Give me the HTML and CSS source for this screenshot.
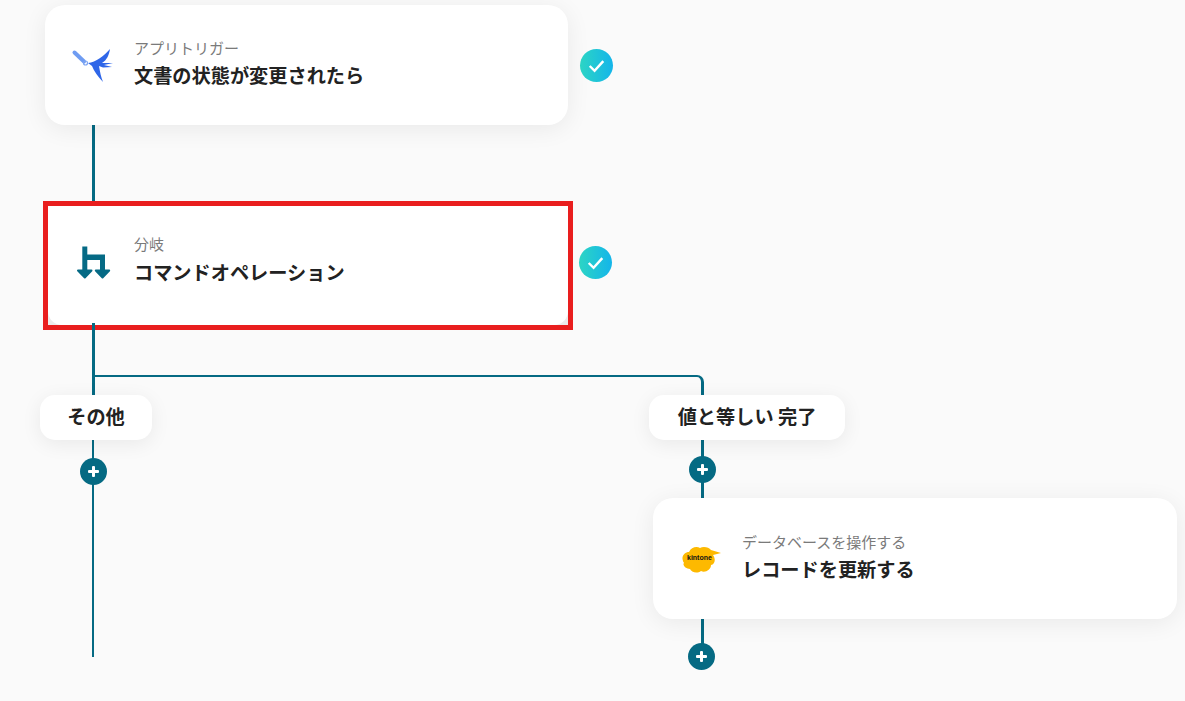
FILE: index.html
```html
<!DOCTYPE html>
<html lang="ja">
<head>
<meta charset="UTF-8">
<meta name="viewport" content="width=device-width, initial-scale=1.0">
<title>フロー</title>
<link rel="stylesheet" href="styles.css">
</head>
<body>

<div class="flow">
  <!-- connectors -->
  <div class="line line-main"></div>
  <div class="line line-left"></div>
  <div class="branch"></div>
  <div class="line line-right"></div>

  <div class="card card-trigger">
    <svg class="card-icon" viewBox="0 0 44 44">
      <path d="M3.5 9.5 L13 18.5" stroke="#6f9cf2" stroke-width="4" stroke-linecap="round" fill="none"/>
      <circle cx="14.5" cy="20" r="2" fill="none" stroke="#7fa6f2" stroke-width="1.2"/>
      <path d="M17 20 C25 19 33 13 39 6 C38 12 36 17 31 20 L42 20 L33 22 L41 24 L32 24.5 L28 23 C29 29 30 34 32 39 C27 34 23 28 21 23 Z" fill="#2f66e8"/>
    </svg>
    <div class="card-text">
      <div class="card-label">アプリトリガー</div>
      <div class="card-title">文書の状態が変更されたら</div>
    </div>
  </div>
  <div class="check check-1"><svg viewBox="0 0 34 34"><path d="M10 17.5 L15 22.5 L24 12.5"/></svg></div>

  <div class="card card-branch">
    <svg class="card-icon" viewBox="0 0 44 44">
      <path d="M6.3 2.5 H11.3 V10.5 H29 V27 H24 V16 H11.3 V27 H6.3 Z" fill="#056a85"/>
      <path d="M2 26.5 H15.5 L8.8 33.5 Z M19.8 26.5 H33.2 L26.5 33.5 Z" fill="#056a85" stroke="#056a85" stroke-width="2" stroke-linejoin="round"/>
    </svg>
    <div class="card-text">
      <div class="card-label">分岐</div>
      <div class="card-title">コマンドオペレーション</div>
    </div>
  </div>
  <div class="line line-stub"></div>
  <div class="check check-2"><svg viewBox="0 0 34 34"><path d="M10 17.5 L15 22.5 L24 12.5"/></svg></div>

  <div class="pill pill-other">その他</div>
  <div class="pill pill-equal">値と等しい 完了</div>

  <div class="plus plus-1"></div>
  <div class="plus plus-2"></div>
  <div class="plus plus-3"></div>

  <div class="card card-kintone">
    <div class="kintone-logo">
      <svg viewBox="0 0 40 28">
        <path d="M1 15 C-1 10 3 6 7 6 C9 1 15 0 18 2 C21 0 27 1 29 4 L39 7 L31 9 C34 13 33 18 29 19 C29 24 23 27 19 25 C15 28 9 26 8 23 C4 23 0 19 2 17 C1.5 16 1 15.5 1 15 Z" fill="#fdb900"/>
      </svg>
      <span class="kintone-name">kintone</span>
    </div>
    <div class="card-text">
      <div class="card-label">データベースを操作する</div>
      <div class="card-title">レコードを更新する</div>
    </div>
  </div>
</div>

</body>
</html>
```

FILE: styles.css
```css
html, body {
  margin: 0;
  height: 100%;
  overflow: hidden;
}
body {
  font-family: "Noto Sans CJK JP", "Noto Sans", sans-serif;
  background-color: #fafafa;
  color: #222;
}

/* nodes of the diagram are placed on a free canvas */
.flow {
  position: relative;
  width: 1185px;
  height: 701px;
}

.line {
  position: absolute;
  background-color: #056a83;
}
.line-main {
  left: 92px;
  top: 120px;
  width: 3px;
  height: 320px;
}
.line-stub {
  left: 92px;
  top: 323px;
  width: 3px;
  height: 8px;
}
.line-left {
  left: 92px;
  top: 440px;
  width: 2px;
  height: 217px;
}
.branch {
  position: absolute;
  left: 93px;
  top: 375px;
  width: 608px;
  height: 12px;
  border-top: 2px solid #056a83;
  border-right: 3px solid #056a83;
  border-top-right-radius: 7px;
}
.line-right {
  left: 701px;
  top: 385px;
  width: 3px;
  height: 265px;
}

.card {
  position: absolute;
  box-sizing: border-box;
  display: flex;
  align-items: center;
  background-color: #fff;
  border-radius: 20px;
  box-shadow: 0 4px 24px rgba(0, 0, 0, 0.07);
}
.card-trigger {
  left: 45px;
  top: 5px;
  width: 523px;
  height: 120px;
  padding-left: 26px;
}
.card-trigger .card-icon {
  margin-right: 19px;
}
.card-branch {
  left: 43px;
  top: 201px;
  width: 530px;
  height: 129px;
  padding-left: 28px;
  border: 5px solid #e91e1e;
  border-radius: 0;
  box-shadow: none;
  background-color: #ececec;
}
/* the rounded card shows through at the bottom corners of the red frame */
.card-branch::before {
  content: "";
  position: absolute;
  inset: 0;
  background-color: #fff;
  border-radius: 0 0 14px 14px;
}
.card-branch .card-icon,
.card-branch .card-text {
  position: relative;
}
.card-kintone {
  left: 653px;
  top: 498px;
  width: 524px;
  height: 121px;
  padding-left: 29px;
}

.card-icon {
  width: 44px;
  height: 44px;
  flex-shrink: 0;
  margin-right: 20px;
}
.card-branch .card-icon {
  margin-right: 14px;
}
.card-text {
  display: flex;
  flex-direction: column;
  gap: 5px;
  padding-bottom: 3px;
}
.card-branch .card-text {
  padding-bottom: 11px;
  gap: 6px;
}
.card-label {
  font-size: 15px;
  line-height: 18px;
  color: #7a7a7a;
}
.card-title {
  font-size: 19.2px;
  line-height: 26px;
  font-weight: 700;
  color: #222;
}

.check {
  position: absolute;
  width: 33px;
  height: 33px;
  border-radius: 50%;
  background: linear-gradient(90deg, #2cd5c4, #14b5ea);
}
.check svg {
  display: block;
  width: 33px;
  height: 33px;
}
.check path {
  fill: none;
  stroke: #fff;
  stroke-width: 2.5;
}
.check-1 {
  left: 580px;
  top: 49px;
}
.check-2 {
  left: 579px;
  top: 246px;
}

.pill {
  position: absolute;
  top: 395px;
  height: 45px;
  padding-bottom: 3px;
  box-sizing: border-box;
  display: flex;
  align-items: center;
  justify-content: center;
  background-color: #fff;
  border-radius: 15px;
  box-shadow: 0 4px 20px rgba(0, 0, 0, 0.07);
  font-size: 19.2px;
  font-weight: 700;
}
.pill-other {
  left: 40px;
  width: 112px;
}
.pill-equal {
  left: 649px;
  width: 196px;
}

.plus {
  position: absolute;
  width: 27px;
  height: 27px;
  border-radius: 50%;
  background-color: #056a83;
}
.plus::before,
.plus::after {
  content: "";
  position: absolute;
  background-color: #fff;
  border-radius: 1px;
}
.plus::before {
  left: 8px;
  top: 12px;
  width: 11px;
  height: 3px;
}
.plus::after {
  left: 12px;
  top: 8px;
  width: 3px;
  height: 11px;
}
.plus-1 {
  left: 80px;
  top: 458px;
}
.plus-2 {
  left: 689px;
  top: 456px;
}
.plus-3 {
  left: 688px;
  top: 643px;
}

.kintone-logo {
  position: relative;
  width: 40px;
  height: 28px;
  margin-right: 20px;
  margin-top: 3px;
  flex-shrink: 0;
}
.kintone-logo svg {
  display: block;
  width: 40px;
  height: 28px;
}
.kintone-name {
  position: absolute;
  left: 5px;
  top: 6px;
  font-family: "Liberation Sans", sans-serif;
  font-size: 7px;
  line-height: 12px;
  font-weight: 700;
  color: #111;
}
```
